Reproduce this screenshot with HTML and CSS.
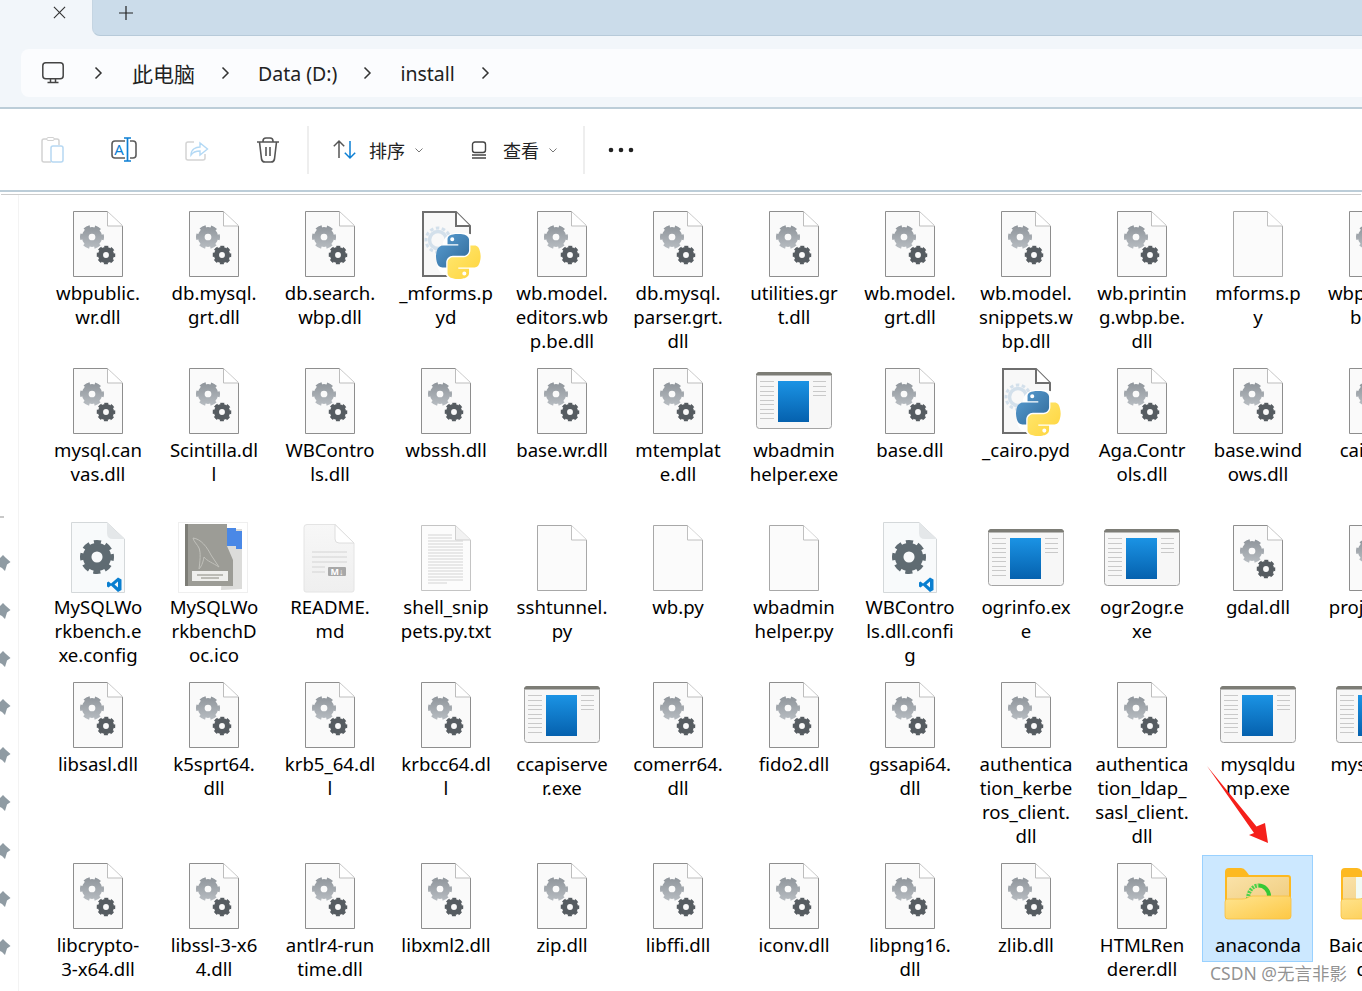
FILE: index.html
```html
<!DOCTYPE html>
<html>
    <head>
        <title>install</title>
        <meta charset="UTF-8">
        <link rel="stylesheet" href="styles.css">
    </head>
    <body>
        <svg class="defs" xmlns="http://www.w3.org/2000/svg">
            <defs>
                <linearGradient id="gear-grey" gradientUnits="userSpaceOnUse" x1="0" y1="-13" x2="0" y2="13">
                    <stop offset="0" stop-color="#8d9399"/><stop offset="1" stop-color="#b9bec3"/>
                </linearGradient>
                <linearGradient id="exe-blue" x1="0" y1="0" x2="0" y2="1">
                    <stop offset="0" stop-color="#1b93e4"/><stop offset="1" stop-color="#0561ae"/>
                </linearGradient>
                <linearGradient id="py-blue" x1="0" y1="0" x2="1" y2="1">
                    <stop offset="0" stop-color="#5a9fd4"/><stop offset="1" stop-color="#306998"/>
                </linearGradient>
                <linearGradient id="py-yellow" x1="0" y1="0" x2="1" y2="1">
                    <stop offset="0" stop-color="#ffe873"/><stop offset="1" stop-color="#ffd43b"/>
                </linearGradient>
                <linearGradient id="folder-front" x1="0" y1="0" x2="1" y2="1">
                    <stop offset="0" stop-color="#ffe48f"/><stop offset="1" stop-color="#fdc845"/>
                </linearGradient>
                <linearGradient id="folder-paper" x1="0" y1="0" x2="1" y2="1">
                    <stop offset="0" stop-color="#fae2a8"/><stop offset="1" stop-color="#efcb7c"/>
                </linearGradient>
                <linearGradient id="readme-page" x1="0" y1="0" x2="0" y2="1">
                    <stop offset="0" stop-color="#f7f7f7"/><stop offset="1" stop-color="#efefef"/>
                </linearGradient>
                <symbol id="gear6" viewBox="-13 -13 26 26">
                    <circle r="7" fill="none" stroke="url(#gear-grey)" stroke-width="7"/>
                    <circle r="10.5" fill="none" stroke="url(#gear-grey)" stroke-width="4" stroke-dasharray="6 5" stroke-dashoffset="3"/>
                </symbol>
                <symbol id="gear-dark" viewBox="-13 -13 26 26">
                    <circle r="7.5" fill="none" stroke="#565c61" stroke-width="7"/>
                    <circle r="11" fill="none" stroke="#565c61" stroke-width="4" stroke-dasharray="5.2 3.44" stroke-dashoffset="2.6"/>
                </symbol>
                <symbol id="gear-config" viewBox="-13 -13 26 26">
                    <circle r="7.5" fill="none" stroke="#5f6b72" stroke-width="6.5"/>
                    <circle r="11" fill="none" stroke="#5f6b72" stroke-width="4" stroke-dasharray="5.2 3.44" stroke-dashoffset="2.6"/>
                </symbol>
                <symbol id="dll" viewBox="0 0 97 78">
                    <path d="M24.5 8.5H58.5L73.5 23V73.5H24.5Z" fill="#fafafa" stroke="#8e8e8e"/>
                    <path d="M58.5 8.5V23H73.5" fill="#fff" stroke="#bdbdbd"/>
                    <use href="#gear6" x="30.5" y="21.5" width="25" height="25"/>
                    <use href="#gear-dark" x="47.5" y="42.5" width="19" height="19"/>
                </symbol>
                <symbol id="blank" viewBox="0 0 97 78">
                    <path d="M24.5 8.5H58.5L73.5 23V73.5H24.5Z" fill="#fbfbfb" stroke="#a8a8a8"/>
                    <path d="M58.5 8.5V23H73.5" fill="#fff" stroke="#c0c0c0"/>
                </symbol>
                <symbol id="txt" viewBox="0 0 97 78">
                    <path d="M24.5 8.5H58.5L73.5 23V73.5H24.5Z" fill="#fcfcfc" stroke="#c4c4c4"/>
                    <path d="M58.5 8.5V23H73.5" fill="#f2f2f2" stroke="#cfcfcf"/>
                    <path d="M31 18H55M31 21H55M31 24H66M31 27H66M31 30H66M31 33H66M31 36H66M31 39H66M31 42H66M31 45H66M31 48H66M31 51H66M31 54H66M31 57H66M31 60H66M31 63H66M31 66H50" stroke="#d4d4d4"/>
                </symbol>
                <symbol id="readme" viewBox="0 0 97 78">
                    <path d="M26 7.500H54L73 26V73Q73 75 71 75H25Q23 75 23 73V10.500Q23 7.500 26 7.500Z" fill="url(#readme-page)" stroke="#e4e4e4"/>
                    <path d="M54 7.500V22Q54 26 58 26H73Z" fill="#fff" stroke="#dedede"/>
                    <path d="M31 35H66M31 40H66M31 45H66M31 50H44M31 55H44" stroke="#d4d4d4" stroke-width="1.2"/>
                    <rect x="47" y="50" width="18" height="9" rx="1" fill="#a8a8a8"/>
                    <text x="56" y="58" class="md-badge">M↓</text>
                </symbol>
                <symbol id="exe" viewBox="0 0 97 78">
                    <rect x="11.5" y="12.5" width="75" height="56" rx="3" fill="#f7f7f7" stroke="#a4a4a4"/>
                    <path d="M11.5 15Q11.5 12.5 14 12.5H84Q86.5 12.5 86.5 15V15H11.5Z" fill="#7d7d76" stroke="#7d7d76"/>
                    <rect x="33" y="21" width="31" height="41" fill="url(#exe-blue)"/>
                    <path d="M15 21.5H29M15 26.5H29M15 31.5H29M15 35.5H29M15 40.5H29M15 44.5H29M15 49.5H29M15 53.5H29M15 58.5H29M68 21.5H81M68 26.5H81M68 31.5H81M68 35.5H81" stroke="#c9c9c9"/>
                </symbol>
                <symbol id="python" viewBox="0 0 112 112">
                    <path d="M54.9 0C50.3 0 46 .4 42.1 1.1 30.8 3.1 28.7 7.3 28.7 15V25.3H55.5V28.7H18.6C10.8 28.7 4 33.3 1.9 42.3-.6 52.5-.7 58.9 1.9 69.5 3.8 77.5 8.3 83.1 16.1 83.1H25.4V70.9C25.4 62 33 54.2 42.1 54.2H68.9C76.4 54.2 82.3 48.1 82.3 40.6V15C82.3 7.8 76.2 2.3 68.9 1.1 64.3.3 59.5 0 54.9 0ZM40.4 8.2A5 5 0 1 1 40.4 18.3 5 5 0 1 1 40.4 8.2Z" fill="url(#py-blue)"/>
                    <path d="M85.6 28.7V40.6C85.6 49.8 77.8 57.6 68.9 57.6H42.1C34.8 57.6 28.7 63.9 28.7 71.2V96.8C28.7 104 35 108.3 42.1 110.4 50.6 112.9 58.8 113.3 68.9 110.4 75.6 108.5 82.3 104.6 82.3 96.8V86.5H55.5V83.1H95.7C103.5 83.1 106.4 77.7 109.1 69.5 111.9 61 111.8 52.9 109.1 42.3 107.2 34.6 103.5 28.7 95.7 28.7ZM70.5 93.5A5 5 0 1 1 70.5 103.6 5 5 0 1 1 70.5 93.5Z" fill="url(#py-yellow)"/>
                </symbol>
                <symbol id="pyd" viewBox="0 0 97 78">
                    <path d="M26 9H59L73 23V73H26Z" fill="#f8f8f8" stroke="#6e6e6e" stroke-width="2"/>
                    <path d="M59 9V23H73" fill="#fff" stroke="#6e6e6e" stroke-width="2"/>
                    <g opacity=".45"><circle cx="41" cy="37" r="8.5" fill="none" stroke="#a8c4dd" stroke-width="3.5"/><circle cx="41" cy="37" r="12" fill="none" stroke="#a8c4dd" stroke-width="3" stroke-dasharray="3.5 2.5"/></g>
                    <path d="M61 30C46 30 46 40 45 45 37 45 37 72 49 72 50 78 80 80 81 68 88 68 88 42 80 42 80 30 72 30 61 30Z" fill="#fff"/>
                    <use href="#python" x="39" y="31" width="45" height="45"/>
                </symbol>
                <symbol id="config" viewBox="0 0 97 78">
                    <path d="M22.5 5.5H58L75.5 22V75.5H22.5Z" fill="#f8fafb" stroke="#d4d8da"/>
                    <path d="M58 5.5V16Q58 22 64 22H75.5Z" fill="#e4e7e9"/>
                    <use href="#gear-config" x="31" y="23" width="34" height="34"/>
                    <path d="M69 60.5 72.5 62.5V73L69 75 62 68.5 59.5 70.5 58 69.5V65.5L59.5 64.5 62 66.5ZM69 64.5 65.5 67.5 69 70.5Z" fill="#0a7fd0"/>
                </symbol>
                <symbol id="workbench" viewBox="0 0 97 78">
                    <rect x="13.500" y="5.500" width="69" height="70" fill="#fff" stroke="#efefef"/>
                    <path d="M60 12H77V72L56 73Z" fill="#dcdcda"/>
                    <rect x="62" y="11" width="9" height="18" fill="#4a88e6"/>
                    <rect x="71" y="14" width="6" height="18" fill="#4a88e6"/>
                    <path d="M20 7H62V29L68 43V69H20Z" fill="#9c9c96"/>
                    <rect x="20" y="7" width="3" height="62" fill="#7d7d77"/>
                    <path d="M28 21C36 22 42 30 46 38L54 50C48 46 42 44 39 40 38 46 36 50 34 52 35 44 36 36 34 31 32 27 29 25 28 21Z" fill="none" stroke="#c0c0ba"/>
                    <rect x="27" y="54" width="36" height="10" fill="#efefed"/>
                    <path d="M32 58H58M36 61H54" stroke="#87877f"/>
                </symbol>
                <symbol id="folder" viewBox="0 0 97 78">
                    <path d="M16 17Q16 13 20 13H32Q35 13 37 16L40 20H79Q82 20 82 23V60Q82 64 78 64H20Q16 64 16 60Z" fill="#fdb921"/>
                    <rect x="18" y="22" width="62" height="30" rx="1" fill="url(#folder-paper)"/>
                </symbol>
                <symbol id="folder-front-part" viewBox="0 0 97 78">
                    <path d="M16 47Q16 44 19 44H33Q36 44 38 43 41 41 44 41H79Q82 41 82 44V61Q82 64 79 64H19Q16 64 16 61Z" fill="url(#folder-front)" stroke="#f9bf3f" stroke-width=".8"/>
                </symbol>
            </defs>
        </svg>

        <div class="page">
            <div class="titlebar">
                <div class="tab-active">
                    <svg class="tab-close" viewBox="0 0 14 14"><path d="M1 1L13 13M13 1L1 13"/></svg>
                </div>
                <div class="tab-rest">
                    <svg class="tab-new" viewBox="0 0 16 16"><path d="M8 1V15M1 8H15"/></svg>
                </div>
            </div>

            <div class="addressband">
                <div class="addressbox">
                    <svg class="monitor" viewBox="0 0 22 22"><rect x=".8" y=".8" width="20.4" height="16" rx="3"/><path d="M8.5 17V20M13.5 17V20M5.5 20.5H16.5"/></svg>
                    <svg class="crumb-sep" viewBox="0 0 10 14"><path d="M2.5 1.5L8 7L2.5 12.5"/></svg>
                    <span class="crumb crumb-cjk">此电脑</span>
                    <svg class="crumb-sep" viewBox="0 0 10 14"><path d="M2.5 1.5L8 7L2.5 12.5"/></svg>
                    <span class="crumb">Data (D:)</span>
                    <svg class="crumb-sep" viewBox="0 0 10 14"><path d="M2.5 1.5L8 7L2.5 12.5"/></svg>
                    <span class="crumb">install</span>
                    <svg class="crumb-sep" viewBox="0 0 10 14"><path d="M2.5 1.5L8 7L2.5 12.5"/></svg>
                </div>
            </div>

            <div class="toolbar">
                <div class="tool">
                    <svg viewBox="0 0 28 28"><path d="M13 26H6Q4 26 4 24V5Q4 3 6 3H19Q21 3 21 5V9" fill="none" stroke="#d2d2d2" stroke-width="1.5"/><rect x="9" y="1.5" width="7" height="3" rx="1" fill="#fff" stroke="#d2d2d2"/><rect x="13" y="10" width="12" height="16" rx="2" fill="none" stroke="#b6d8f2" stroke-width="1.5"/></svg>
                </div>
                <div class="tool">
                    <svg viewBox="0 0 28 28"><path d="M15 5H5Q2 5 2 8V19Q2 22 5 22H15M20 5H23Q26 5 26 8V19Q26 22 23 22H20" fill="none" stroke="#5c5c5c" stroke-width="1.6"/><path d="M17.5 2V25M14 2H21M14 25H21" fill="none" stroke="#0c7fd4" stroke-width="1.7"/><text x="9" y="19" class="rename-a">A</text></svg>
                </div>
                <div class="tool">
                    <svg viewBox="0 0 28 28"><path d="M12 6H6Q4 6 4 8V22Q4 24 6 24H21Q23 24 23 22V18" fill="none" stroke="#d4d4d4" stroke-width="1.5"/><path d="M9 19C9 13 14 11 18 11V7L25.5 13 18 19V15C14 15 11 16 9 19Z" fill="#fff" stroke="#b3d9f5" stroke-width="1.4"/></svg>
                </div>
                <div class="tool">
                    <svg viewBox="0 0 28 28"><path d="M3 6H25M9 6V5Q9 2 12 2H16Q19 2 19 5V6M5.5 6L7.5 23Q8 26 11 26H17Q20 26 20.500 23L22.500 6M12 11V20M16 11V20" fill="none" stroke="#555" stroke-width="1.6"/></svg>
                </div>
                <div class="sep"></div>
                <svg class="sort-ico" viewBox="0 0 26 26"><path d="M6 4V21M.8 9.200L6 4L11.200 9.200" fill="none" stroke="#555" stroke-width="1.5"/><path d="M17 4V21M11.800 15.800L17 21L22.200 15.800" fill="none" stroke="#0c7fd4" stroke-width="1.5"/></svg>
                <span class="tool-text sort-text">排序</span>
                <svg class="chev" viewBox="0 0 10 10"><path d="M1.500 3.500L5 7L8.500 3.500"/></svg>
                <svg class="view-ico" viewBox="0 0 18 18"><rect x="2.500" y="1" width="13" height="10.500" rx="2.500" fill="none" stroke="#444" stroke-width="1.400"/><path d="M2 14H16M2 17H16" stroke="#444" stroke-width="1.400"/></svg>
                <span class="tool-text view-text">查看</span>
                <svg class="chev" viewBox="0 0 10 10"><path d="M1.500 3.500L5 7L8.500 3.500"/></svg>
                <div class="sep sep-two"></div>
                <svg class="dots" viewBox="0 0 26 6"><circle cx="3" cy="3" r="2.300"/><circle cx="13" cy="3" r="2.300"/><circle cx="23" cy="3" r="2.300"/></svg>
            </div>
            <div class="toolbar-line"></div>

            <div class="main">
                <div class="side">
                    <div class="side-dash"></div>
                    <svg class="pin" viewBox="0 0 12 16"><path d="M0 3L3 0L6 3L10.500 7L7 9.500L5 16L2 13L0 12Z"/></svg>
                    <svg class="pin" viewBox="0 0 12 16"><path d="M0 3L3 0L6 3L10.500 7L7 9.500L5 16L2 13L0 12Z"/></svg>
                    <svg class="pin" viewBox="0 0 12 16"><path d="M0 3L3 0L6 3L10.500 7L7 9.500L5 16L2 13L0 12Z"/></svg>
                    <svg class="pin" viewBox="0 0 12 16"><path d="M0 3L3 0L6 3L10.500 7L7 9.500L5 16L2 13L0 12Z"/></svg>
                    <svg class="pin" viewBox="0 0 12 16"><path d="M0 3L3 0L6 3L10.500 7L7 9.500L5 16L2 13L0 12Z"/></svg>
                    <svg class="pin" viewBox="0 0 12 16"><path d="M0 3L3 0L6 3L10.500 7L7 9.500L5 16L2 13L0 12Z"/></svg>
                    <svg class="pin" viewBox="0 0 12 16"><path d="M0 3L3 0L6 3L10.500 7L7 9.500L5 16L2 13L0 12Z"/></svg>
                    <svg class="pin" viewBox="0 0 12 16"><path d="M0 3L3 0L6 3L10.500 7L7 9.500L5 16L2 13L0 12Z"/></svg>
                    <svg class="pin" viewBox="0 0 12 16"><path d="M0 3L3 0L6 3L10.500 7L7 9.500L5 16L2 13L0 12Z"/></svg>
                </div>
                <div class="files">
                    <!-- row 1 -->
                    <div class="file"><svg class="ico"><use href="#dll"/></svg><div class="name">wbpublic.<br>wr.dll</div></div>
                    <div class="file"><svg class="ico"><use href="#dll"/></svg><div class="name">db.mysql.<br>grt.dll</div></div>
                    <div class="file"><svg class="ico"><use href="#dll"/></svg><div class="name">db.search.<br>wbp.dll</div></div>
                    <div class="file"><svg class="ico"><use href="#pyd"/></svg><div class="name">_mforms.p<br>yd</div></div>
                    <div class="file"><svg class="ico"><use href="#dll"/></svg><div class="name">wb.model.<br>editors.wb<br>p.be.dll</div></div>
                    <div class="file"><svg class="ico"><use href="#dll"/></svg><div class="name">db.mysql.<br>parser.grt.<br>dll</div></div>
                    <div class="file"><svg class="ico"><use href="#dll"/></svg><div class="name">utilities.gr<br>t.dll</div></div>
                    <div class="file"><svg class="ico"><use href="#dll"/></svg><div class="name">wb.model.<br>grt.dll</div></div>
                    <div class="file"><svg class="ico"><use href="#dll"/></svg><div class="name">wb.model.<br>snippets.w<br>bp.dll</div></div>
                    <div class="file"><svg class="ico"><use href="#dll"/></svg><div class="name">wb.printin<br>g.wbp.be.<br>dll</div></div>
                    <div class="file"><svg class="ico"><use href="#blank"/></svg><div class="name">mforms.p<br>y</div></div>
                    <div class="file"><svg class="ico"><use href="#dll"/></svg><div class="name">wbprivate.<br>be.dll</div></div>
                    <!-- row 2 -->
                    <div class="file"><svg class="ico"><use href="#dll"/></svg><div class="name">mysql.can<br>vas.dll</div></div>
                    <div class="file"><svg class="ico"><use href="#dll"/></svg><div class="name">Scintilla.dl<br>l</div></div>
                    <div class="file"><svg class="ico"><use href="#dll"/></svg><div class="name">WBContro<br>ls.dll</div></div>
                    <div class="file"><svg class="ico"><use href="#dll"/></svg><div class="name">wbssh.dll</div></div>
                    <div class="file"><svg class="ico"><use href="#dll"/></svg><div class="name">base.wr.dll</div></div>
                    <div class="file"><svg class="ico"><use href="#dll"/></svg><div class="name">mtemplat<br>e.dll</div></div>
                    <div class="file"><svg class="ico"><use href="#exe"/></svg><div class="name">wbadmin<br>helper.exe</div></div>
                    <div class="file"><svg class="ico"><use href="#dll"/></svg><div class="name">base.dll</div></div>
                    <div class="file"><svg class="ico"><use href="#pyd"/></svg><div class="name">_cairo.pyd</div></div>
                    <div class="file"><svg class="ico"><use href="#dll"/></svg><div class="name">Aga.Contr<br>ols.dll</div></div>
                    <div class="file"><svg class="ico"><use href="#dll"/></svg><div class="name">base.wind<br>ows.dll</div></div>
                    <div class="file"><svg class="ico"><use href="#dll"/></svg><div class="name">cairo.dll</div></div>
                    <!-- row 3 -->
                    <div class="file"><svg class="ico"><use href="#config"/></svg><div class="name">MySQLWo<br>rkbench.e<br>xe.config</div></div>
                    <div class="file"><svg class="ico"><use href="#workbench"/></svg><div class="name">MySQLWo<br>rkbenchD<br>oc.ico</div></div>
                    <div class="file"><svg class="ico"><use href="#readme"/></svg><div class="name">README.<br>md</div></div>
                    <div class="file"><svg class="ico"><use href="#txt"/></svg><div class="name">shell_snip<br>pets.py.txt</div></div>
                    <div class="file"><svg class="ico"><use href="#blank"/></svg><div class="name">sshtunnel.<br>py</div></div>
                    <div class="file"><svg class="ico"><use href="#blank"/></svg><div class="name">wb.py</div></div>
                    <div class="file"><svg class="ico"><use href="#blank"/></svg><div class="name">wbadmin<br>helper.py</div></div>
                    <div class="file"><svg class="ico"><use href="#config"/></svg><div class="name">WBContro<br>ls.dll.confi<br>g</div></div>
                    <div class="file"><svg class="ico"><use href="#exe"/></svg><div class="name">ogrinfo.ex<br>e</div></div>
                    <div class="file"><svg class="ico"><use href="#exe"/></svg><div class="name">ogr2ogr.e<br>xe</div></div>
                    <div class="file"><svg class="ico"><use href="#dll"/></svg><div class="name">gdal.dll</div></div>
                    <div class="file"><svg class="ico"><use href="#dll"/></svg><div class="name">proj_72.dll</div></div>
                    <!-- row 4 -->
                    <div class="file"><svg class="ico"><use href="#dll"/></svg><div class="name">libsasl.dll</div></div>
                    <div class="file"><svg class="ico"><use href="#dll"/></svg><div class="name">k5sprt64.<br>dll</div></div>
                    <div class="file"><svg class="ico"><use href="#dll"/></svg><div class="name">krb5_64.dl<br>l</div></div>
                    <div class="file"><svg class="ico"><use href="#dll"/></svg><div class="name">krbcc64.dl<br>l</div></div>
                    <div class="file"><svg class="ico"><use href="#exe"/></svg><div class="name">ccapiserve<br>r.exe</div></div>
                    <div class="file"><svg class="ico"><use href="#dll"/></svg><div class="name">comerr64.<br>dll</div></div>
                    <div class="file"><svg class="ico"><use href="#dll"/></svg><div class="name">fido2.dll</div></div>
                    <div class="file"><svg class="ico"><use href="#dll"/></svg><div class="name">gssapi64.<br>dll</div></div>
                    <div class="file"><svg class="ico"><use href="#dll"/></svg><div class="name">authentica<br>tion_kerbe<br>ros_client.<br>dll</div></div>
                    <div class="file"><svg class="ico"><use href="#dll"/></svg><div class="name">authentica<br>tion_ldap_<br>sasl_client.<br>dll</div></div>
                    <div class="file"><svg class="ico"><use href="#exe"/></svg><div class="name">mysqldu<br>mp.exe</div></div>
                    <div class="file"><svg class="ico"><use href="#exe"/></svg><div class="name">mysql.exe</div></div>
                    <!-- row 5 -->
                    <div class="file"><svg class="ico"><use href="#dll"/></svg><div class="name">libcrypto-<br>3-x64.dll</div></div>
                    <div class="file"><svg class="ico"><use href="#dll"/></svg><div class="name">libssl-3-x6<br>4.dll</div></div>
                    <div class="file"><svg class="ico"><use href="#dll"/></svg><div class="name">antlr4-run<br>time.dll</div></div>
                    <div class="file"><svg class="ico"><use href="#dll"/></svg><div class="name">libxml2.dll</div></div>
                    <div class="file"><svg class="ico"><use href="#dll"/></svg><div class="name">zip.dll</div></div>
                    <div class="file"><svg class="ico"><use href="#dll"/></svg><div class="name">libffi.dll</div></div>
                    <div class="file"><svg class="ico"><use href="#dll"/></svg><div class="name">iconv.dll</div></div>
                    <div class="file"><svg class="ico"><use href="#dll"/></svg><div class="name">libpng16.<br>dll</div></div>
                    <div class="file"><svg class="ico"><use href="#dll"/></svg><div class="name">zlib.dll</div></div>
                    <div class="file"><svg class="ico"><use href="#dll"/></svg><div class="name">HTMLRen<br>derer.dll</div></div>
                    <div class="file selected">
                        <svg class="ico" viewBox="0 0 97 78">
                            <use href="#folder"/>
                            <path d="M39 44A10.500 13.500 0 0 1 49.500 30.500" fill="none" stroke="#4bd24b" stroke-width="4" stroke-dasharray="2 1"/>
                            <path d="M49.500 30.500A10.500 10.500 0 0 1 60 41" fill="none" stroke="#35c935" stroke-width="4"/>
                            <use href="#folder-front-part"/>
                        </svg>
                        <div class="name">anaconda</div>
                    </div>
                    <div class="file">
                        <svg class="ico" viewBox="0 0 97 78">
                            <use href="#folder"/>
                            <rect x="31" y="22" width="40" height="24" fill="#f2fbf5"/>
                            <use href="#folder-front-part"/>
                        </svg>
                        <div class="name">BaiduSync<br>disk</div>
                    </div>
                </div>
            </div>

            <svg class="arrow" viewBox="0 0 70 85"><path d="M4 5L53.500 65.500L62 62L65 82L46 74L51 72Z" fill="#f5201b"/></svg>
            <div class="watermark">CSDN @无言非影</div>
        </div>
    </body>
</html>
```

FILE: styles.css
```css
body{
    margin: 0;
    background-color: white;
    font-family: "Noto Sans", "Noto Sans CJK SC", sans-serif;
    color: black;
}
.defs{
    display: block;
    width: 0;
    height: 0;
}
.page{
    position: relative;
    width: 1362px;
    height: 991px;
    overflow: hidden;
}

/* tabs */
.titlebar{
    display: flex;
    height: 36px;
    background-color: #f2f6fa;
}
.tab-active{
    width: 92px;
    flex: none;
    display: flex;
    align-items: center;
    box-sizing: border-box;
    padding: 0 0 11px 53px;
}
.tab-close{
    width: 13px;
    height: 13px;
    fill: none;
    stroke: #333;
    stroke-width: 1.2;
}
.tab-rest{
    flex: 1;
    display: flex;
    align-items: center;
    padding: 0 0 10px 25px;
    background-color: #cbdcea;
    border-bottom: 1px solid #b7cad9;
    border-left: 1px solid #c5d5e2;
    border-bottom-left-radius: 8px;
}
.tab-new{
    width: 16px;
    height: 16px;
    fill: none;
    stroke: #222;
    stroke-width: 1.2;
}

/* address bar */
.addressband{
    height: 73px;
    box-sizing: border-box;
    padding: 13px 0 0 21px;
    background-color: #f2f6fa;
    border-bottom: 2px solid #bccdd8;
}
.addressbox{
    height: 48px;
    display: flex;
    align-items: center;
    gap: 25px;
    padding-left: 21px;
    background-color: #fbfcfe;
    border-radius: 8px 0 0 8px;
}
.monitor{
    width: 22px;
    height: 22px;
    margin: 0 4px 0 0;
    fill: none;
    stroke: #444;
    stroke-width: 1.5;
}
.crumb-sep{
    width: 10px;
    height: 14px;
    fill: none;
    stroke: #333;
    stroke-width: 1.5;
}
.crumb{
    font-size: 19.5px;
    color: #222;
    margin-left: 3px;
}
.crumb-cjk{
    font-size: 21px;
    margin-left: 4px;
}

/* toolbar */
.toolbar{
    height: 81px;
    display: flex;
    align-items: center;
    padding-left: 16px;
    background-color: white;
}
.tool{
    width: 72px;
    height: 28px;
    display: flex;
    justify-content: center;
}
.tool svg{
    width: 28px;
    height: 28px;
}
.rename-a{
    font-family: "Noto Sans", sans-serif;
    font-size: 15px;
    text-anchor: middle;
    fill: #0c7fd4;
}
.sep{
    width: 2px;
    height: 48px;
    margin-left: 3px;
    background-color: #eeeeee;
}
.sep-two{
    margin-left: 25px;
}
.sort-ico{
    width: 26px;
    height: 26px;
    margin-left: 24px;
}
.tool-text{
    font-size: 18px;
    color: #222;
    font-family: "Noto Sans CJK SC", sans-serif;
}
.sort-text{
    margin-left: 10px;
}
.view-text{
    margin-left: 15px;
}
.chev{
    width: 10px;
    height: 10px;
    margin-left: 9px;
    fill: none;
    stroke: #777;
    stroke-width: 1;
}
.view-ico{
    width: 18px;
    height: 18px;
    margin-left: 46px;
}
.dots{
    width: 26px;
    height: 6px;
    margin-left: 23px;
    fill: #222;
}
.toolbar-line{
    height: 2px;
    background-color: #bccdd8;
    border-bottom: 1px solid white;
    box-shadow: 0 3px 0 -1px #cccccc;
}

/* main area */
.main{
    display: flex;
    margin-top: 2px;
}
.side{
    width: 18px;
    flex: none;
    border-right: 1px solid #f3f3f3;
    padding-top: 321px;
    display: flex;
    flex-direction: column;
    align-items: flex-start;
    gap: 32px;
    height: 477px;
}
.side-dash{
    width: 4px;
    height: 2px;
    margin-bottom: 5px;
    background-color: #c8c8c8;
}
.pin{
    width: 12px;
    height: 16px;
    fill: #8f9ba3;
}
.files{
    display: grid;
    grid-template-columns: repeat(12, 111px);
    grid-auto-rows: minmax(155px, auto);
    column-gap: 5px;
    row-gap: 2px;
    padding: 8px 0 0 23px;
}
.file{
    align-self: start;
    box-sizing: border-box;
    padding-bottom: 4px;
    text-align: center;
    border: 1px solid transparent;
}
.selected{
    background-color: #cce8ff;
    border-color: #99d1ff;
}
.ico{
    display: block;
    width: 97px;
    height: 78px;
    margin: -1px auto 0;
}
.name{
    font-size: 18.6px;
    line-height: 24px;
    padding-left: 1px;
    white-space: nowrap;
}
.md-badge{
    font-family: "Noto Sans", sans-serif;
    font-size: 9px;
    font-weight: bold;
    text-anchor: middle;
    fill: white;
}

/* things drawn over the screenshot */
.arrow{
    position: absolute;
    left: 1203px;
    top: 761px;
    width: 70px;
    height: 85px;
}
.watermark{
    position: absolute;
    left: 1210px;
    top: 961px;
    font-size: 17.5px;
    line-height: 24px;
    color: rgba(110, 110, 110, 0.75);
}
```
